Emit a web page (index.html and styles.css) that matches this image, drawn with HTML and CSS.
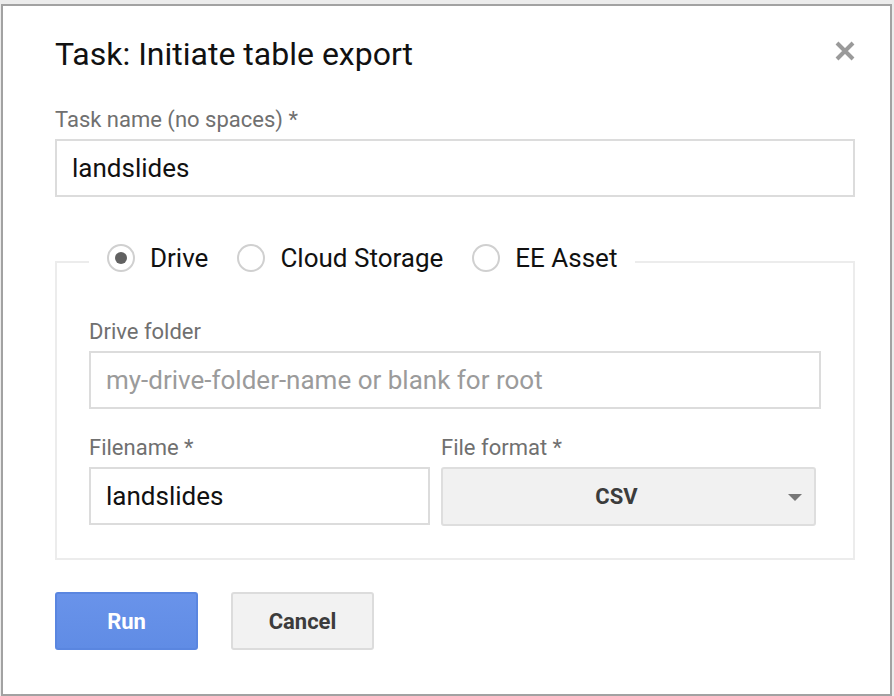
FILE: index.html
```html
<!DOCTYPE html>
<html>
<head>
<meta charset="utf-8">
<link rel="stylesheet" href="styles.css">
</head>
<body>
<div class="dialog">
  <div class="header">
    <h1 class="title">Task: Initiate table export</h1>
    <button class="close" aria-label="Close">
      <svg width="22" height="22" viewBox="0 0 22 22"><path d="M3 3L19 19M19 3L3 19" stroke="#9a9a9a" stroke-width="4" stroke-linecap="butt"/></svg>
    </button>
  </div>
  <label class="label">Task name (no spaces) *</label>
  <div class="input"><span class="value">landslides</span></div>

  <fieldset class="dest">
    <legend class="radios">
      <span class="radio-item"><span class="radio checked"></span><span class="radio-text">Drive</span></span>
      <span class="radio-item"><span class="radio"></span><span class="radio-text">Cloud Storage</span></span>
      <span class="radio-item"><span class="radio"></span><span class="radio-text">EE Asset</span></span>
    </legend>
    <label class="label">Drive folder</label>
    <div class="input input-wide"><span class="placeholder">my-drive-folder-name or blank for root</span></div>
    <div class="row">
      <div class="col col-name">
        <label class="label">Filename *</label>
        <div class="input"><span class="value">landslides</span></div>
      </div>
      <div class="col col-format">
        <label class="label">File format *</label>
        <div class="select"><span class="select-value">CSV</span><span class="caret"></span></div>
      </div>
    </div>
  </fieldset>

  <div class="actions">
    <button class="btn btn-primary">Run</button>
    <button class="btn btn-default">Cancel</button>
  </div>
</div>
</body>
</html>
```

FILE: styles.css
```css
* { box-sizing: border-box; }
html, body { margin: 0; height: 100%; }
body {
  background: #ececec;
  padding: 4px 1px 0 1px;
  font-family: Roboto, "Liberation Sans", Arial, sans-serif;
  overflow: hidden;
}
.dialog {
  width: 891px;
  height: 692px;
  background: #fff;
  border: 2px solid #a2a2a2;
  padding: 0 35px 0 52px;
  display: flex;
  flex-direction: column;
}
.header {
  display: flex;
  align-items: center;
  justify-content: space-between;
  margin-top: 31px;
  height: 34px;
}
.title {
  margin: 0;
  font-size: 32px;
  font-weight: 400;
  line-height: 34px;
  color: #111;
}
.close {
  border: 0;
  background: none;
  padding: 0;
  width: 22px;
  height: 22px;
  margin-right: -1px;
  margin-top: -7px;
}
.close svg { display: block; }
.label {
  display: block;
  font-size: 22px;
  line-height: 26px;
  color: #707070;
}
.header + .label { margin-top: 36px; }
.input {
  margin-top: 6px;
  height: 58px;
  border: 2px solid #dcdcdc;
  display: flex;
  align-items: center;
  padding: 0 15px;
  font-size: 26px;
}
.value { color: #111; }
.placeholder { color: #9b9b9b; }
.dest {
  margin: 45px 0 0 0;
  padding: 37px 32px 32px 32px;
  border: 2px solid #ececec;
  min-width: 0;
}
.radios {
  display: flex;
  align-items: flex-start;
  gap: 29px;
  padding: 0 18px;
  margin-left: 0;
  height: 40px;
}
.radio-item {
  display: flex;
  align-items: center;
  gap: 15px;
  height: 32px;
}
.radio {
  width: 28px;
  height: 28px;
  border-radius: 50%;
  border: 2px solid #d0d0d0;
  display: flex;
  align-items: center;
  justify-content: center;
}
.radio.checked::after {
  content: "";
  width: 12px;
  height: 12px;
  border-radius: 50%;
  background: #616161;
}
.radio-text {
  font-size: 26px;
  color: #111;
}
.input-wide { margin-bottom: 26px; }
.row {
  display: grid;
  grid-template-columns: 341px 375px;
  gap: 11px;
}
.select {
  margin-top: 6px;
  height: 59px;
  border: 2px solid #dedede;
  border-radius: 3px;
  background: #f1f1f1;
  display: flex;
  align-items: center;
  justify-content: center;
  padding-right: 24px;
  position: relative;
}
.select-value {
  font-size: 22px;
  font-weight: 700;
  color: #3c3c3c;
}
.caret {
  position: absolute;
  right: 12px;
  top: 25px;
  width: 0;
  height: 0;
  border-left: 7px solid transparent;
  border-right: 7px solid transparent;
  border-top: 7px solid #777;
}
.actions {
  display: flex;
  gap: 33px;
  margin-top: 32px;
}
.btn {
  width: 143px;
  height: 58px;
  border-radius: 3px;
  font-family: Roboto, "Liberation Sans", Arial, sans-serif;
  font-size: 22px;
  font-weight: 700;
}
.btn-primary {
  background: linear-gradient(#6993ea, #608ce5);
  border: 2px solid #5a86e0;
  color: #fff;
}
.btn-default {
  background: #f2f2f2;
  border: 2px solid #dcdcdc;
  color: #3c3c3c;
}
```
